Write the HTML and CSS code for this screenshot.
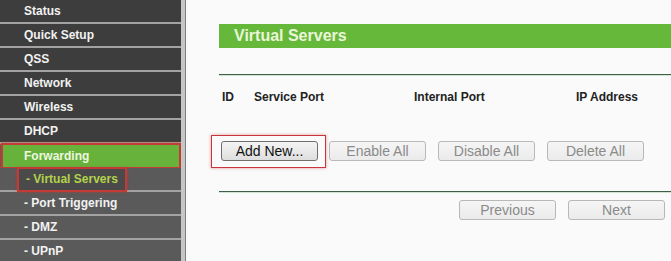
FILE: index.html
```html
<!DOCTYPE html>
<html lang="en">
<head>
  <meta charset="UTF-8">
  <title>Virtual Servers</title>
  <link rel="stylesheet" href="styles.css">
</head>
<body>
<div class="menu">
  <div class="item">Status</div>
  <div class="item">Quick Setup</div>
  <div class="item">QSS</div>
  <div class="item">Network</div>
  <div class="item">Wireless</div>
  <div class="item">DHCP</div>
  <div class="item active">Forwarding</div>
  <div class="item sub"><span class="mark">- Virtual Servers</span></div>
  <div class="item sub">- Port Triggering</div>
  <div class="item sub">- DMZ</div>
  <div class="item sub">- UPnP</div>
</div>
<div class="edge"></div>
<div class="main">
  <div class="title-bar">Virtual Servers</div>
  <div class="rule"></div>
  <div class="head-row">
    <span>ID</span>
    <span>Service Port</span>
    <span>Internal Port</span>
    <span>IP Address</span>
  </div>
  <div class="actions">
    <span class="mark-btn"><button class="button">Add New...</button></span>
    <button class="button off">Enable All</button>
    <button class="button off">Disable All</button>
    <button class="button off">Delete All</button>
  </div>
  <div class="rule low"></div>
  <div class="pager">
    <button class="button off">Previous</button>
    <button class="button off">Next</button>
  </div>
</div>
</body>
</html>
```

FILE: styles.css
```css
body {
  font-family: "Liberation Sans", Arial, sans-serif;
  margin: 0;
  padding: 0;
  background-color: #fafafa;
  display: flex;
  height: 261px;
  overflow: hidden;
}
.menu {
  width: 181px;
  flex-shrink: 0;
  background-color: #5c5c5c;
}
.item {
  height: 22px;
  line-height: 22px;
  border-bottom: 2px solid #a3a3a3;
  background-color: #3d3d3d;
  color: #f2f2f2;
  font-size: 12px;
  font-weight: bold;
  padding-left: 24px;
}
.item.active {
  background-color: #66b23a;
  color: #eef7e0;
  border: 2px solid #c43a35;
  box-shadow: 0 0 3px rgba(196, 58, 53, 0.6);
  margin: -1px 0 -1px 1px;
  padding-left: 21px;
}
.item.sub {
  background-color: #5a5a5a;
}
.mark {
  color: #b3d24d;
  display: inline-block;
  margin-left: -7px;
  padding: 0 7px;
  height: 21px;
  line-height: 21px;
  border: 2px solid #c43a35;
  border-top-width: 1px;
  background-color: #4a4a4a;
  box-shadow: 0 0 3px rgba(196, 58, 53, 0.6);
}
.edge {
  width: 4px;
  flex-shrink: 0;
  background-color: #c6c6c6;
  border-right: 1px solid #7c7c7c;
}
.main {
  flex: 1;
  padding: 24px 0 0 33px;
}
.title-bar {
  background-color: #66b83a;
  color: #eaf6d8;
  font-size: 16px;
  font-weight: bold;
  height: 24px;
  line-height: 24px;
  padding-left: 15px;
}
.rule {
  margin-top: 26px;
  border-top: 1px solid #3f5f4a;
  border-bottom: 1px solid #cfe3cf;
}
.rule.low {
  margin-top: 30px;
}
.head-row {
  display: grid;
  grid-template-columns: 32px 160px 162px 1fr;
  padding-left: 3px;
  margin-top: 14px;
  font-size: 12px;
  font-weight: bold;
  color: #222;
}
.actions {
  display: flex;
  align-items: center;
  gap: 12px;
  margin-top: 37px;
  padding-left: 3px;
}
.mark-btn {
  display: inline-block;
  padding: 5px 7px 6px 9px;
  margin: -6px -9px -7px -11px;
  border: 1px solid #c8353a;
  box-shadow: 0 0 3px rgba(200, 53, 58, 0.5);
}
.button {
  font-family: "Liberation Sans", Arial, sans-serif;
  font-size: 14px;
  width: 97px;
  height: 20px;
  padding: 0;
  border: 1px solid #6f6f6f;
  border-radius: 3px;
  background: linear-gradient(#f4f4f4, #dedede);
  color: #111;
}
.button.off {
  border-color: #b8b8b8;
  background: linear-gradient(#f5f5f5, #ebebeb);
  color: #8a8a8a;
}
.pager {
  display: flex;
  justify-content: flex-end;
  gap: 12px;
  margin-top: 7px;
  padding-right: 6px;
}
```
